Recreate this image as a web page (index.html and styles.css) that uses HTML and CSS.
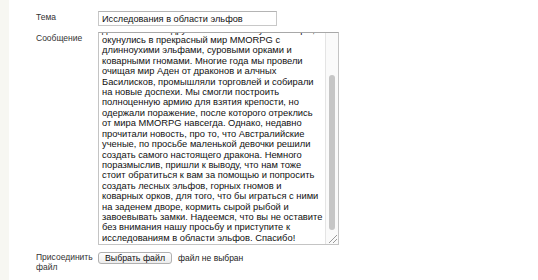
FILE: index.html
```html
<!DOCTYPE html>
<html>
<head>
<meta charset="utf-8">
<title>Сообщение</title>
<link rel="stylesheet" href="styles.css">
</head>
<body>
<div class="page">
  <div class="strip"></div>
  <form class="form">
    <label class="label" for="subject">Тема</label>
    <div class="field">
      <input class="text" id="subject" type="text" value="Исследования в области эльфов">
    </div>

    <label class="label" for="message">Сообщение</label>
    <div class="field box">
      <textarea class="message" id="message">Здравствуйте, уважаемые учёные!
Мы, группа единомышленников из небольшого
города, пишем вам с необычной просьбой. Уже
много лет мы увлекаемся фэнтези и когда-то
давно вместе с друзьями с головой ушли в игры,
окунулись в прекрасный мир MMORPG с
длинноухими эльфами, суровыми орками и
коварными гномами. Многие года мы провели
очищая мир Аден от драконов и алчных
Басилисков, промышляли торговлей и собирали
на новые доспехи. Мы смогли построить
полноценную армию для взятия крепости, но
одержали поражение, после которого отреклись
от мира MMORPG навсегда. Однако, недавно
прочитали новость, про то, что Австралийские
ученые, по просьбе маленькой девочки решили
создать самого настоящего дракона. Немного
поразмыслив, пришли к выводу, что нам тоже
стоит обратиться к вам за помощью и попросить
создать лесных эльфов, горных гномов и
коварных орков, для того, что бы играться с ними
на заденем дворе, кормить сырой рыбой и
завоевывать замки. Надеемся, что вы не оставите
без внимания нашу просьбу и приступите к
исследованиям в области эльфов. Спасибо!</textarea>
      <div class="track"><div class="thumb"></div><div class="grip"></div></div>
    </div>

    <label class="label" for="attach">Присоединить файл</label>
    <div class="field file">
      <button class="pick" id="attach" type="button">Выбрать файл</button>
      <span class="none">файл не выбран</span>
    </div>
  </form>
</div>
<script src="script.js"></script>
</body>
</html>
```

FILE: styles.css
```css
html, body { margin: 0; padding: 0; background: #fff; }
body { font-family: "Liberation Sans", Arial, sans-serif; color: #222; }

.page { display: flex; min-height: 280px; }
.strip { width: 9px; background: #f7f7f2; }

.form {
  display: grid;
  grid-template-columns: 62px auto;
  row-gap: 6px;
  padding: 11px 0 0 27px;
  align-content: start;
}

.label { font-size: 8.5px; line-height: 9.5px; color: #333; padding-top: 2px; }

.field { display: flex; align-items: center; }

.text {
  width: 179px; height: 15px; box-sizing: border-box;
  margin: 0; padding: 0 3px;
  border: 1px solid #c8c8c8; border-top-color: #b4b4b4;
  font-family: "Liberation Sans", Arial, sans-serif; font-size: 9.2px; color: #111;
  outline: none;
}

/* textarea + drawn scrollbar */
.box { position: relative; align-items: stretch; }
.message {
  width: 241px; height: 213px; box-sizing: border-box;
  margin: 0; padding: 2px 12px 1px 3px;
  border: 1px solid #c4c4c4; border-top-color: #a8a8a8;
  font-family: "Liberation Sans", Arial, sans-serif; font-size: 9.35px; line-height: 10.4px; color: #111;
  white-space: pre; overflow-y: scroll; overflow-x: hidden;
  resize: none; outline: none;
}
.track {
  position: absolute; top: 1px; right: 1px; bottom: 1px; width: 12px;
  background: #fafafa; border-left: 1px solid #e4e4e4;
}
.thumb {
  position: absolute; left: 3px; top: 42px; width: 6px; height: 155px;
  background: #c6c6c6; border-radius: 3px;
}
.grip {
  position: absolute; right: 1px; bottom: 1px; width: 8px; height: 8px;
  background: linear-gradient(135deg, transparent 45%, #999 45%, #999 52%, transparent 52%, transparent 70%, #999 70%, #999 77%, transparent 77%);
}

.file { padding-top: 1px; align-items: flex-start; }
.pick {
  height: 12px; padding: 0 6px; margin: 0;
  font-family: "Liberation Sans", Arial, sans-serif; font-size: 8.8px; line-height: 10px; color: #111;
  background: linear-gradient(#ffffff, #ececec);
  border: 1px solid #b0b0b0; border-radius: 3px;
}
.none { font-size: 8.5px; line-height: 12px; color: #222; margin-left: 6px; }
```

FILE: script.js
```js
var box = document.getElementById('message');
box.scrollTop = box.scrollHeight;
```
